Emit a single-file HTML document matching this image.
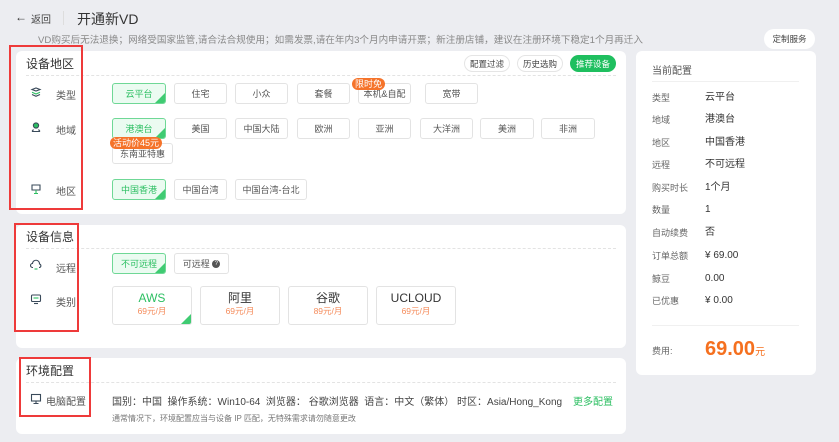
<!DOCTYPE html>
<html><head><meta charset="utf-8"><style>
*{box-sizing:border-box;margin:0;padding:0}
body{width:839px;height:442px;background:#ecedf1;font-family:"Liberation Sans","Noto Sans CJK SC",sans-serif;position:relative;overflow:hidden;color:#333}
.a{position:absolute;white-space:nowrap}
.card{position:absolute;background:#fff;border-radius:6px}
.dash{position:absolute;border-top:1px dashed #e3e3e3}
.b{position:absolute;height:21px;border:1px solid #e3e3e3;border-radius:3px;background:#fff;font-size:9px;color:#555;display:flex;align-items:center;justify-content:center;white-space:nowrap}
.s{background:#ebfbf1;border-color:#6fd896;color:#2cbf62;overflow:hidden}
.s:after{content:"";position:absolute;right:0;bottom:0;border-style:solid;border-width:0 0 10px 10px;border-color:transparent transparent #3fcb72 transparent}
.t{font-size:12px;color:#333}
.l{font-size:10px;color:#555}
.red{position:absolute;border:2px solid #ee3a3a}
.badge{position:absolute;background:#f5732a;color:#fff;font-size:9px;border-radius:6px;padding:0 3px;height:12px;line-height:12px}
.rl{position:absolute;left:652px;font-size:9px;color:#666;line-height:14px;height:14px}
.rv{position:absolute;left:705px;font-size:10px;color:#333;line-height:14px;height:14px}
.pill{position:absolute;height:17px;border:1px solid #e5e5e5;border-radius:9px;font-size:8.5px;color:#444;display:flex;align-items:center;justify-content:center;background:#fff}
.big{position:absolute;top:286px;height:39px;width:80px;border:1px solid #e3e3e3;border-radius:3px;text-align:center;background:#fff}
.big .n{font-size:12px;color:#333;margin-top:4px;line-height:14px}
.big .p{font-size:8.5px;color:#f58b5a;line-height:12px}
svg.ic{position:absolute;left:30px}
</style></head><body>
<div class="a" style="left:15px;top:10px;font-size:12px;color:#333">←</div>
<div class="a" style="left:31px;top:11px;font-size:10px;color:#444">返回</div>
<div class="a" style="left:63px;top:11px;width:1px;height:14px;background:#ddd"></div>
<div class="a" style="left:77px;top:9px;font-size:14px;color:#333">开通新VD</div>
<div class="a" style="left:38px;top:32px;font-size:9.6px;color:#888">VD购买后无法退换；网络受国家监管,请合法合规使用；如需发票,请在年内3个月内申请开票；新注册店铺，建议在注册环境下稳定1个月再迁入</div>
<div class="pill" style="left:764px;top:29px;width:51px;height:20px;border:none;border-radius:10px">定制服务</div>

<div class="card" style="left:16px;top:51px;width:610px;height:163px"></div>
<div class="a t" style="left:26px;top:55px">设备地区</div>
<div class="pill" style="left:464px;top:55px;width:46px">配置过滤</div>
<div class="pill" style="left:517px;top:55px;width:46px">历史选购</div>
<div class="pill" style="left:570px;top:55px;width:46px;background:#1fbf5f;color:#fff;border-color:#1fbf5f">推荐设备</div>
<div class="dash" style="left:26px;top:75px;width:590px"></div>
<svg class="ic" style="top:86px" width="12" height="12" viewBox="0 0 12 12" fill="none" stroke="#3a4a5a" stroke-width="1.1"><path d="M2 3.5 6 2l4 1.5L6 5z"/><path d="M2 6.2 6 8l4-1.8" stroke="#2cbf62"/><path d="M2 8.5 6 10.3l4-1.8"/></svg>
<div class="a l" style="left:56px;top:87px">类型</div>
<div class="b s" style="left:112px;top:83px;width:54px">云平台</div>
<div class="b" style="left:174px;top:83px;width:53px">住宅</div>
<div class="b" style="left:235px;top:83px;width:53px">小众</div>
<div class="b" style="left:297px;top:83px;width:53px">套餐</div>
<div class="b" style="left:358px;top:83px;width:53px">本机&amp;自配</div>
<div class="b" style="left:425px;top:83px;width:53px">宽带</div>
<div class="badge" style="left:352px;top:78px">限时免</div>
<svg class="ic" style="top:121px" width="12" height="12" viewBox="0 0 12 12" fill="none" stroke="#3a4a5a" stroke-width="1.1"><circle cx="6" cy="4.5" r="2.6" fill="#2cbf62" stroke="#3a4a5a"/><path d="M2 10.5h8M3.5 8.5 2 10.5M8.5 8.5 10 10.5"/></svg>
<div class="a l" style="left:56px;top:122px">地域</div>
<div class="b s" style="left:112px;top:118px;width:54px">港澳台</div>
<div class="b" style="left:174px;top:118px;width:53px">美国</div>
<div class="b" style="left:235px;top:118px;width:53px">中国大陆</div>
<div class="b" style="left:297px;top:118px;width:53px">欧洲</div>
<div class="b" style="left:358px;top:118px;width:53px">亚洲</div>
<div class="b" style="left:420px;top:118px;width:53px">大洋洲</div>
<div class="b" style="left:480px;top:118px;width:54px">美洲</div>
<div class="b" style="left:541px;top:118px;width:54px">非洲</div>
<div class="b" style="left:112px;top:143px;width:61px">东南亚特惠</div>
<div class="badge" style="left:110px;top:137px">活动价45元</div>
<svg class="ic" style="top:183px" width="12" height="12" viewBox="0 0 12 12" fill="none" stroke="#3a4a5a" stroke-width="1.1"><path d="M2 2h8v5H2z"/><path d="M6 7v3M4 10.5h4" stroke="#2cbf62"/></svg>
<div class="a l" style="left:56px;top:183px">地区</div>
<div class="b s" style="left:112px;top:179px;width:54px">中国香港</div>
<div class="b" style="left:174px;top:179px;width:53px">中国台湾</div>
<div class="b" style="left:235px;top:179px;width:72px">中国台湾-台北</div>
<div class="red" style="left:9px;top:45px;width:74px;height:165px"></div>

<div class="card" style="left:16px;top:225px;width:610px;height:123px"></div>
<div class="a t" style="left:26px;top:228px">设备信息</div>
<div class="dash" style="left:26px;top:248px;width:590px"></div>
<svg class="ic" style="top:259px" width="12" height="12" viewBox="0 0 12 12" fill="none" stroke="#3a4a5a" stroke-width="1.1"><path d="M3 8.5H2.5a2 2 0 0 1 0-4 3.5 3.5 0 0 1 7 .5 1.8 1.8 0 0 1 0 3.5H9"/><path d="M4.5 10h3" stroke="#2cbf62"/></svg>
<div class="a l" style="left:56px;top:260px">远程</div>
<div class="b s" style="left:112px;top:253px;width:54px">不可远程</div>
<div class="b" style="left:174px;top:253px;width:55px">可远程&nbsp;<span style="display:inline-block;width:8px;height:8px;border-radius:4px;background:#555;color:#fff;font-size:6px;line-height:8px;text-align:center">?</span></div>
<svg class="ic" style="top:293px" width="12" height="12" viewBox="0 0 12 12" fill="none" stroke="#3a4a5a" stroke-width="1.1"><rect x="1.5" y="2" width="9" height="6.5" rx="1"/><path d="M3.5 5h5" stroke="#2cbf62"/><path d="M4 10.5h4"/></svg>
<div class="a l" style="left:56px;top:294px">类别</div>
<div class="big s" style="left:112px"><div class="n" style="color:#2cbf62">AWS</div><div class="p">69元/月</div></div>
<div class="big" style="left:200px"><div class="n">阿里</div><div class="p">69元/月</div></div>
<div class="big" style="left:288px"><div class="n">谷歌</div><div class="p">89元/月</div></div>
<div class="big" style="left:376px"><div class="n">UCLOUD</div><div class="p">69元/月</div></div>
<div class="red" style="left:14px;top:223px;width:65px;height:109px"></div>

<div class="card" style="left:16px;top:358px;width:610px;height:76px"></div>
<div class="a t" style="left:26px;top:362px">环境配置</div>
<div class="dash" style="left:26px;top:382px;width:590px"></div>
<svg class="ic" style="top:393px" width="12" height="12" viewBox="0 0 12 12" fill="none" stroke="#3a4a5a" stroke-width="1.1"><rect x="1.5" y="1.5" width="9" height="6.5"/><path d="M6 8v2.5M3.5 10.5h5"/></svg>
<div class="a l" style="left:46px;top:393px">电脑配置</div>
<div class="a" style="left:112px;top:393px;font-size:10px;color:#444">国别：中国&nbsp; 操作系统：Win10-64&nbsp; 浏览器：&nbsp;谷歌浏览器&nbsp; 语言：中文（繁体）&nbsp;时区：Asia/Hong_Kong</div>
<div class="a" style="left:573px;top:393px;font-size:10px;color:#2cbf62">更多配置</div>
<div class="a" style="left:112px;top:413px;font-size:8px;color:#777">通常情况下，环境配置应当与设备 IP 匹配，无特殊需求请勿随意更改</div>
<div class="red" style="left:19px;top:357px;width:72px;height:60px"></div>

<div class="card" style="left:636px;top:51px;width:180px;height:324px"></div>
<div class="a" style="left:652px;top:62px;font-size:10px;color:#555">当前配置</div>
<div class="a" style="left:652px;top:81px;width:147px;height:1px;background:#f0f0f0"></div>
<div class="rl" style="top:91px">类型</div><div class="rv" style="top:91px">云平台</div>
<div class="rl" style="top:113px">地域</div><div class="rv" style="top:113px">港澳台</div>
<div class="rl" style="top:136px">地区</div><div class="rv" style="top:136px">中国香港</div>
<div class="rl" style="top:158px">远程</div><div class="rv" style="top:158px">不可远程</div>
<div class="rl" style="top:181px">购买时长</div><div class="rv" style="top:181px">1个月</div>
<div class="rl" style="top:203px">数量</div><div class="rv" style="top:203px">1</div>
<div class="rl" style="top:226px">自动续费</div><div class="rv" style="top:226px">否</div>
<div class="rl" style="top:249px">订单总额</div><div class="rv" style="top:249px">¥ 69.00</div>
<div class="rl" style="top:272px">鲸豆</div><div class="rv" style="top:272px">0.00</div>
<div class="rl" style="top:294px">已优惠</div><div class="rv" style="top:294px">¥ 0.00</div>
<div class="a" style="left:652px;top:325px;width:147px;height:1px;background:#f0f0f0"></div>
<div class="rl" style="top:344px">费用:</div>
<div class="a" style="left:705px;top:338px;font-size:20px;font-weight:bold;color:#f5701f">69.00<span style="font-size:10px;font-weight:normal">元</span></div>
</body></html>
